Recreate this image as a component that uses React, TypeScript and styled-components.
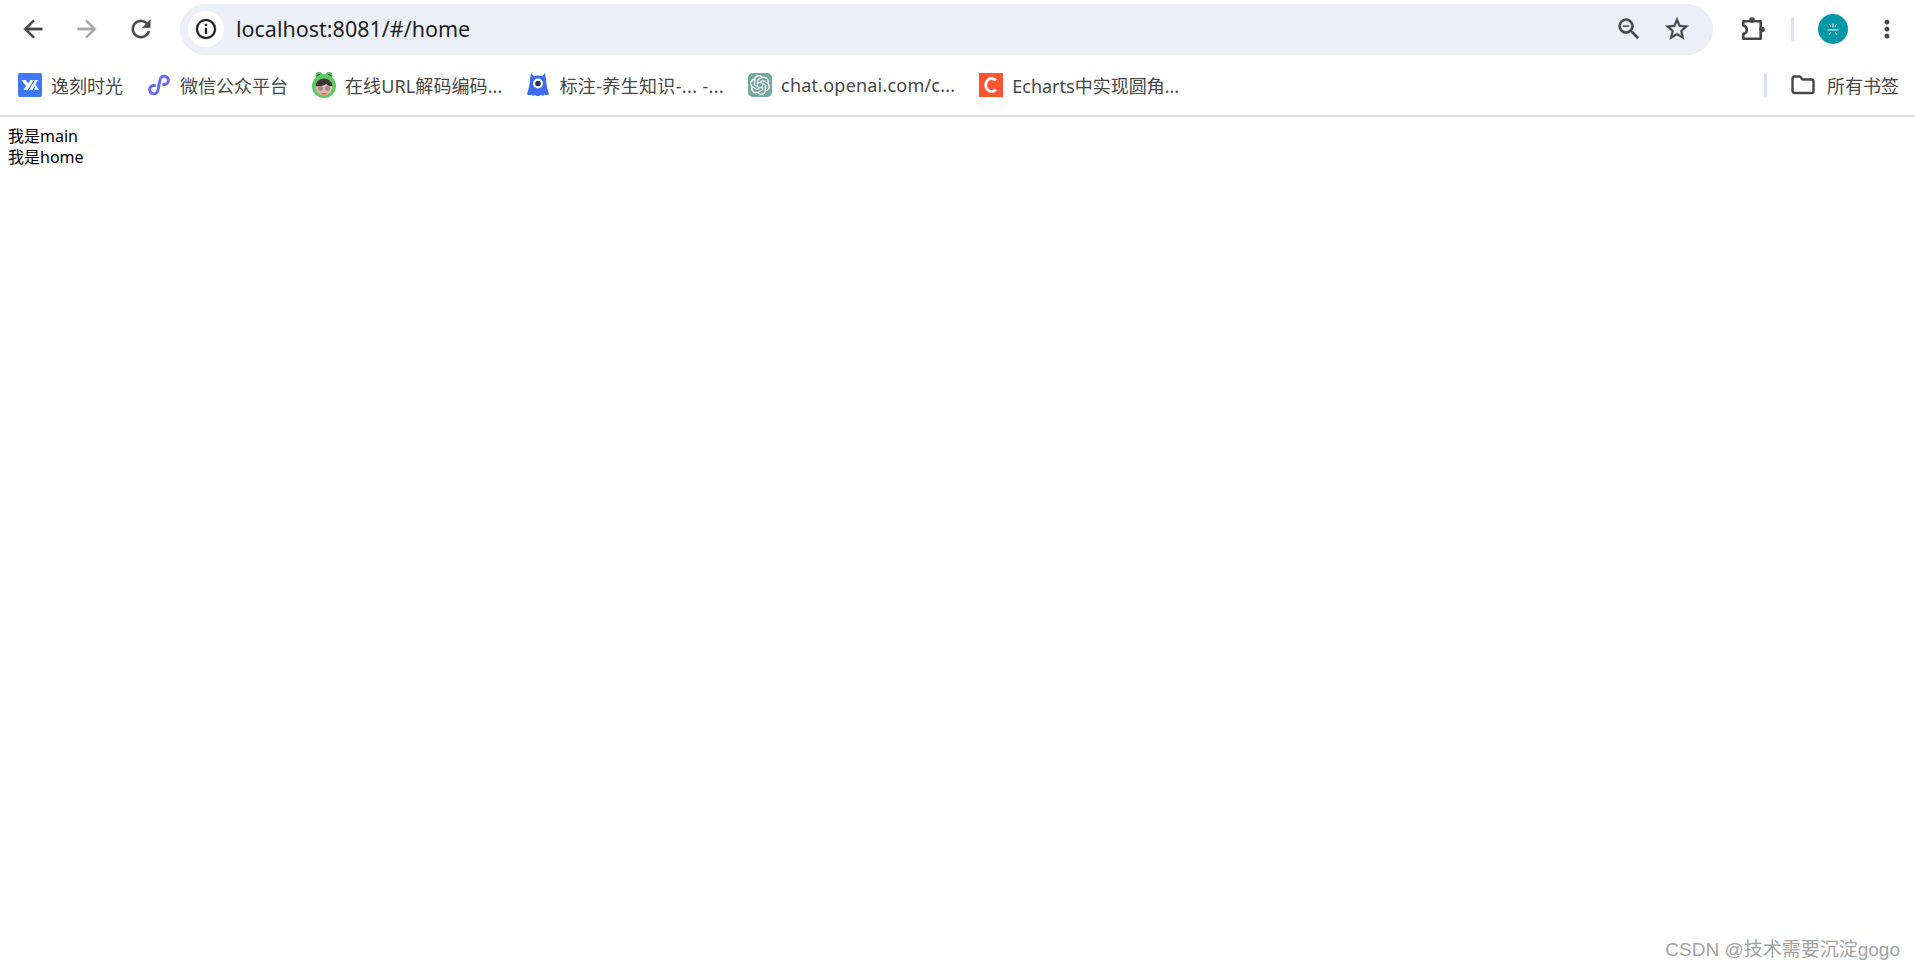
import React, { FC } from 'react';

import styled, { createGlobalStyle } from 'styled-components';
import { SiOpenai } from 'react-icons/si';

const UI_FONT = `"Noto Sans", "Noto Sans CJK SC", sans-serif`;

const GlobalStyle = createGlobalStyle`
  html, body {
    margin: 0;
    padding: 0;
    height: 100%;
    background: #fff;
  }

  #root {
    height: 100%;
  }
`;

const Window = styled.div`
  position: relative;
  display: flex;
  flex-direction: column;
  height: 969px;
  overflow: hidden;
  background: #fff;
`;

const Toolbar = styled.div`
  display: flex;
  align-items: center;
  height: 58px;
  padding: 0 1px 0 6px;
`;

const ToolButton = styled.div`
  display: flex;
  align-items: center;
  justify-content: center;
  flex: none;
  width: 54px;
  height: 50px;
`;

const Omnibox = styled.div`
  display: flex;
  align-items: center;
  flex: 1;
  height: 51px;
  margin: 0 13px 0 12px;
  padding: 0 12px 0 8px;
  border-radius: 26px;
  background: #eceff8;
`;

const InfoChip = styled.div`
  display: flex;
  align-items: center;
  justify-content: center;
  flex: none;
  width: 36px;
  height: 36px;
  margin-right: 12px;
  border-radius: 50%;
  background: #fff;
`;

const Url = styled.span`
  flex: 1;
  padding-bottom: 2px;
  font-family: ${UI_FONT};
  font-size: 21.5px;
  color: #1f1f1f;
`;

const OmniAction = styled.div`
  display: flex;
  align-items: center;
  justify-content: center;
  flex: none;
  width: 48px;
`;

const Separator = styled.div`
  flex: none;
  width: 3px;
  height: 24px;
  border-radius: 1px;
  background: #d3e3fd;
`;

const ToolbarSeparator = styled(Separator)`
  margin: 0 12px 0 11px;
`;

const Avatar = styled.div`
  display: flex;
  align-items: center;
  justify-content: center;
  width: 30px;
  height: 30px;
  border-radius: 50%;
  background: #0097a7;
`;

const BookmarkBar = styled.div`
  display: flex;
  align-items: center;
  gap: 24px;
  height: 59px;
  padding: 0 16px 4px 18px;
  box-sizing: border-box;
  border-bottom: 2px solid #e0e0e0;
`;

const Bookmark = styled.div<{ $tracking?: number }>`
  display: flex;
  align-items: center;
  gap: 9px;
  font-family: ${UI_FONT};
  font-size: 18px;
  letter-spacing: ${props => props.$tracking || 0}px;
  color: #474747;
  white-space: nowrap;
`;

const AllBookmarks = styled(Bookmark)`
  gap: 11px;
`;

const FolderWrap = styled.div`
  display: flex;
  align-items: center;
  gap: 23px;
  margin-left: auto;
`;

const OpenAiTile = styled.div`
  display: flex;
  align-items: center;
  justify-content: center;
  width: 24px;
  height: 24px;
  border-radius: 5px;
  background: #74aa9c;
  color: #fff;
`;

const Content = styled.main`
  padding: 9px 8px 8px;
  font-family: ${UI_FONT};
  font-size: 16px;
  line-height: 21px;
  color: #000;
`;

const Watermark = styled.div`
  position: absolute;
  right: 15px;
  bottom: 8px;
  font-family: "Liberation Sans", "Noto Sans CJK SC", sans-serif;
  font-size: 19px;
  color: #a3a3a3;
  white-space: nowrap;
`;

interface IIconProps {
  d: string;
  color?: string;
  size?: number;
}

const MaterialIcon: FC<IIconProps> = ({ d, color = '#474747', size = 28 }) => (
  <svg width={size} height={size} viewBox="0 0 24 24" fill={color} stroke={color} strokeWidth="0.3">
    <path d={d} />
  </svg>
);

const ICONS = {
  back: 'M20 11H7.83l5.59-5.59L12 4l-8 8 8 8 1.41-1.41L7.83 13H20v-2z',
  forward: 'M12 4l-1.41 1.41L16.17 11H4v2h12.17l-5.58 5.59L12 20l8-8z',
  reload:
    'M17.65 6.35A7.958 7.958 0 0 0 12 4c-4.42 0-7.99 3.58-7.99 8s3.57 8 7.99 8c3.73 0 6.84-2.55 7.73-6h-2.08A5.99 5.99 0 0 1 12 18c-3.31 0-6-2.69-6-6s2.69-6 6-6c1.66 0 3.14.69 4.22 1.78L13 11h7V4l-2.35 2.35z',
  info:
    'M11 7h2v2h-2zm0 4h2v6h-2zm1-9C6.48 2 2 6.48 2 12s4.48 10 10 10 10-4.48 10-10S17.52 2 12 2zm0 18c-4.41 0-8-3.59-8-8s3.59-8 8-8 8 3.59 8 8-3.59 8-8 8z',
  zoomOut:
    'M15.5 14h-.79l-.28-.27A6.471 6.471 0 0 0 16 9.5 6.5 6.5 0 1 0 9.5 16c1.61 0 3.09-.59 4.23-1.57l.27.28v.79l5 4.99L20.49 19l-4.99-5zm-6 0C7.01 14 5 11.99 5 9.5S7.01 5 9.5 5 14 7.01 14 9.5 11.99 14 9.5 14zM7 9h5v1H7z',
  star:
    'M22 9.24l-7.19-.62L12 2 9.19 8.63 2 9.24l5.46 4.73L5.82 21 12 17.27 18.18 21l-1.63-7.03L22 9.24zM12 15.4l-3.76 2.27 1-4.28-3.32-2.88 4.38-.38L12 6.1l1.71 4.04 4.38.38-3.32 2.88 1 4.28L12 15.4z',
  dots:
    'M12 8c1.1 0 2-.9 2-2s-.9-2-2-2-2 .9-2 2 .9 2 2 2zm0 2c-1.1 0-2 .9-2 2s.9 2 2 2 2-.9 2-2-.9-2-2-2zm0 6c-1.1 0-2 .9-2 2s.9 2 2 2 2-.9 2-2-.9-2-2-2z',
};

const ExtensionIcon = () => (
  <svg width="28" height="28" viewBox="0 0 28 28" fill="none">
    <path
      d="M4.3 6.3H21.7V23.7H4.3V19a4.4 4.4 0 0 0 0-8.6z"
      stroke="#474747"
      strokeWidth="2.6"
      strokeLinejoin="round"
    />
    <circle cx="13" cy="5" r="2.8" fill="#474747" />
    <circle cx="23" cy="14.5" r="2.8" fill="#474747" />
  </svg>
);

const AvatarMark = () => (
  <svg width="14" height="14" viewBox="0 0 14 14" stroke="#fff" strokeWidth="1" fill="none">
    <path d="M7 1.5v4M3.5 2L5 5M10.5 2L9 5M1.5 8h11M5 10l-2 3M9 10l2 3" />
  </svg>
);

const FolderIcon = () => (
  <svg width="26" height="26" viewBox="0 0 26 26" fill="none">
    <path
      d="M2.5 6.5a2 2 0 0 1 2-2H10l2.5 3h9a2 2 0 0 1 2 2V19a2 2 0 0 1-2 2h-17a2 2 0 0 1-2-2z"
      stroke="#474747"
      strokeWidth="2.4"
      strokeLinejoin="round"
    />
  </svg>
);

const YikeIcon = () => (
  <svg width="24" height="24" viewBox="0 0 24 24">
    <rect width="24" height="24" rx="2" fill="#3e78f7" />
    <path d="M3.5 7H8l2 3.5L12.5 7H16L9.500 17H5.500L8 13z" fill="#fff" />
    <path d="M17 7h3l-5.500 10H11zM17.500 11.500L21 17h-4.500z" fill="#fff" />
  </svg>
);

const LinkIcon = () => (
  <svg width="24" height="24" viewBox="0 0 24 24" fill="none">
    <path
      d="M7.5 12.5A4.2 4.2 0 1 0 11 17L13 7A4.2 4.2 0 1 1 16.5 11.5"
      stroke="#6a6cf2"
      strokeWidth="3"
      strokeLinecap="round"
    />
  </svg>
);

const FrogIcon = () => (
  <svg width="24" height="26" viewBox="0 0 24 26">
    <circle cx="7" cy="3.5" r="3.4" fill="#52c45f" />
    <circle cx="17" cy="3.5" r="3.4" fill="#52c45f" />
    <circle cx="7" cy="3.3" r="1.6" fill="#24403a" />
    <circle cx="17" cy="3.3" r="1.6" fill="#24403a" />
    <circle cx="12" cy="14" r="12" fill="#5acb66" />
    <circle cx="12" cy="15" r="8.5" fill="#eab3a3" />
    <path d="M3.5 14a8.5 7.5 0 0 1 17 0c-3 .5-5-.5-6-2-2 1.5-7 3-11 2z" fill="#3f3532" />
    <circle cx="8.5" cy="16.5" r="2.4" fill="#8f8f8f" />
    <circle cx="15.5" cy="16.5" r="2.4" fill="#8f8f8f" />
    <path d="M9 21h6a3.2 2.4 0 0 1-6 0z" fill="#e3584f" />
  </svg>
);

const MonsterIcon = () => (
  <svg width="24" height="26" viewBox="-1 -1 24 26">
    <path
      d="M4 0l3 3.5a9 9 0 0 1 8 0L18 0l1 6c.5 5 1 10 3 15-1.5 1.5-3 1.500-4.500.5-1 1.500-2.500 1.500-3.500.5-1.500 1.500-4.500 1.500-6 0-1 1-2.500 1-3.500-.5-1.500 1-3 1-4.500-.5 2-5 2.500-10 3-15z"
      fill="#3f6cf2"
    />
    <circle cx="11" cy="10.5" r="5" fill="#fff" />
    <circle cx="11" cy="10.5" r="2.8" fill="#26304f" />
  </svg>
);

const CsdnIcon = () => (
  <svg width="24" height="24" viewBox="0 0 24 24" fill="none">
    <rect width="24" height="24" fill="#fc5531" />
    <path d="M17 7.5a6 6.5 0 1 0 0 9" stroke="#fff" strokeWidth="2.8" />
  </svg>
);

const BOOKMARKS = [
  { label: '逸刻时光', icon: <YikeIcon /> },
  { label: '微信公众平台', icon: <LinkIcon /> },
  { label: '在线URL解码编码...', icon: <FrogIcon />, tracking: 0.1 },
  { label: '标注-养生知识-... -...', icon: <MonsterIcon />, tracking: 0.35 },
  {
    label: 'chat.openai.com/c...',
    icon: (
      <OpenAiTile>
        <SiOpenai size={20} />
      </OpenAiTile>
    ),
    tracking: 0.2,
  },
  { label: 'Echarts中实现圆角...', icon: <CsdnIcon /> },
];

const App: FC = () => (
  <Window>
    <GlobalStyle />
    <Toolbar>
      <ToolButton>
        <MaterialIcon d={ICONS.back} />
      </ToolButton>
      <ToolButton>
        <MaterialIcon d={ICONS.forward} color="#a8a8a8" />
      </ToolButton>
      <ToolButton>
        <MaterialIcon d={ICONS.reload} />
      </ToolButton>
      <Omnibox>
        <InfoChip>
          <MaterialIcon d={ICONS.info} color="#1f1f1f" size={24} />
        </InfoChip>
        <Url>localhost:8081/#/home</Url>
        <OmniAction>
          <MaterialIcon d={ICONS.zoomOut} />
        </OmniAction>
        <OmniAction>
          <MaterialIcon d={ICONS.star} />
        </OmniAction>
      </Omnibox>
      <ToolButton>
        <ExtensionIcon />
      </ToolButton>
      <ToolbarSeparator />
      <ToolButton>
        <Avatar>
          <AvatarMark />
        </Avatar>
      </ToolButton>
      <ToolButton>
        <MaterialIcon d={ICONS.dots} />
      </ToolButton>
    </Toolbar>
    <BookmarkBar>
      {BOOKMARKS.map(({ label, icon, tracking }) => (
        <Bookmark key={label} $tracking={tracking}>
          {icon}
          {label}
        </Bookmark>
      ))}
      <FolderWrap>
        <Separator />
        <AllBookmarks>
          <FolderIcon />
          所有书签
        </AllBookmarks>
      </FolderWrap>
    </BookmarkBar>
    <Content>
      <div>我是main</div>
      <div>我是home</div>
    </Content>
    <Watermark>CSDN @技术需要沉淀gogo</Watermark>
  </Window>
);

export default App;
